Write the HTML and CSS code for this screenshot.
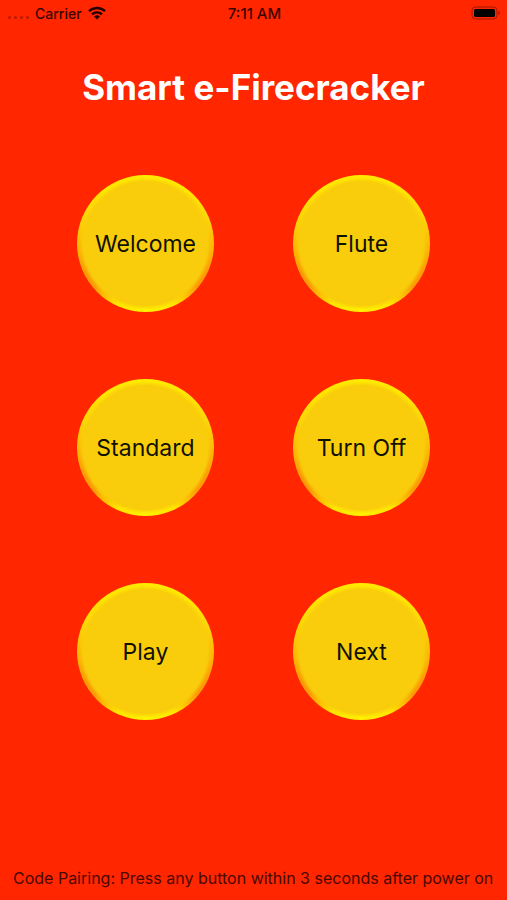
FILE: index.html
```
<!DOCTYPE html>
<html lang="en">

<head>
    <meta charset="UTF-8">
    <meta name="viewport" content="width=device-width, initial-scale=1.0">
    <title>Smart e-Firecracker</title>
    <link rel="stylesheet" href="styles.css">
</head>

<body>

    <!-- Status bar -->
    <header class="status-bar">
        <div class="carrier">
            <span class="signal"><i></i><i></i><i></i><i></i></span>
            <span>Carrier</span>
            <svg class="wifi" viewBox="0 0 18 14" aria-hidden="true">
                <path d="M1 5.2a11.5 11.5 0 0 1 16 0" />
                <path d="M4 8.4a7.2 7.2 0 0 1 10 0" />
                <path class="dot" d="M9 13.6L6 10.6a4.3 4.3 0 0 1 6 0z" />
            </svg>
        </div>
        <time>7:11 AM</time>
        <svg class="battery" viewBox="0 0 30 14" aria-hidden="true">
            <rect class="shell" x="1" y="1" width="25" height="12" rx="3.5" />
            <rect x="3" y="3" width="21" height="8" rx="1.5" />
            <path class="cap" d="M27.5 5v4q1.5-.6 1.5-2t-1.5-2z" />
        </svg>
    </header>

    <main class="container">
        <h1>Smart e-Firecracker</h1>
        <div class="buttons">
            <button class="btn" type="button">Welcome</button>
            <button class="btn" type="button">Flute</button>
            <button class="btn" type="button">Standard</button>
            <button class="btn" type="button">Turn Off</button>
            <button class="btn" type="button">Play</button>
            <button class="btn" type="button">Next</button>
        </div>
    </main>

    <footer class="note">Code Pairing: Press any button within 3 seconds after power on</footer>

</body>

</html>
```
FILE: styles.css
```
* {
    margin: 0;
    padding: 0;
    box-sizing: border-box;
    font-family: Inter, 'Liberation Sans', sans-serif;
}

body {
    display: flex;
    flex-direction: column;
    min-height: 100vh;
    background-color: #ff2600;
    color: #3a0500;
}

/* Status bar */
.status-bar {
    display: grid;
    grid-template-columns: 1fr auto 1fr;
    align-items: center;
    height: 26px;
    padding: 0 6px 0 8px;
    font-size: 14px;
    font-weight: 500;
}

.status-bar time {
    font-size: 15px;
}

.carrier {
    display: flex;
    align-items: center;
    gap: 6px;
}

.signal {
    display: flex;
    gap: 3px;
    padding-top: 8px;
}

.signal i {
    width: 3px;
    height: 3px;
    border-radius: 50%;
    background: #b81c00;
}

.wifi {
    width: 18px;
    height: 14px;
    fill: none;
    stroke: #200000;
    stroke-width: 2.4;
}

.wifi .dot {
    fill: #200000;
    stroke: none;
}

.battery {
    width: 30px;
    height: 14px;
    justify-self: end;
}

.battery .shell {
    fill: none;
    stroke: #a01800;
}

.battery .cap {
    fill: #a01800;
}

/* Main screen */
.container {
    flex: 1;
    display: flex;
    flex-direction: column;
    align-items: center;
    padding-top: 38px;
}

h1 {
    font-size: 35px;
    line-height: 46px;
    font-weight: 700;
    color: white;
}

.buttons {
    display: grid;
    grid-template-columns: auto auto;
    gap: 67px 79px;
    margin-top: 65px;
}

.btn {
    width: 137px;
    height: 137px;
    border: none;
    border-radius: 50%;
    font-size: 23px;
    color: #111100;
    cursor: pointer;
    background:
        radial-gradient(circle, #f9cd0b 62px, transparent 66px),
        conic-gradient(#ffea00 0deg, #ffe600 35deg, #fcd808 65deg, #fbbc06 90deg, #fc9c05 115deg, #fc9c05 130deg, #ffe600 155deg, #fff000 180deg, #ffe600 205deg, #fc9c05 230deg, #fc9c05 245deg, #fbbc06 270deg, #fcd808 295deg, #ffe600 325deg, #ffea00 360deg);
}

.btn:active {
    filter: brightness(0.9);
}

.note {
    padding: 0 13px 12px;
    font-size: 16px;
    line-height: 20px;
    color: #4a0800;
}
```
